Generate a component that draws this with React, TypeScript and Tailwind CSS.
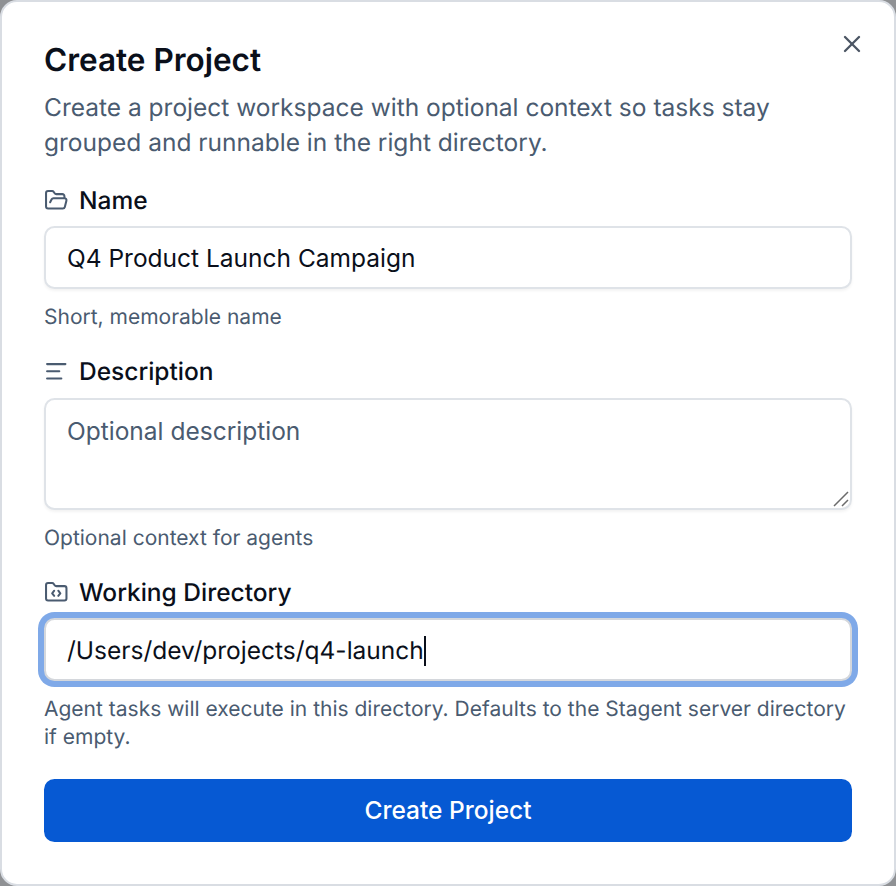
import React from 'react';
import { AlignLeft, FolderCode, FolderOpen, X } from 'lucide-react';

function FieldLabel({ icon: Icon, children }: { icon: typeof X; children: React.ReactNode }) {
  return (
    <div className="flex h-[28px] items-center gap-[10.5px] text-[24.5px] font-medium leading-[28px] text-[#0a0f1a]">
      <Icon className="h-[24.5px] w-[24.5px] text-[#4a5b70]" />
      <span>{children}</span>
    </div>
  );
}

function Help({ children }: { children: React.ReactNode }) {
  return <p className="text-[21px] leading-[28px] text-[#4a5b70]">{children}</p>;
}

export default function App() {
  return (
    <div className="h-[886px] w-[896px] bg-[#8f9194] font-['Inter',sans-serif] [text-rendering:geometricPrecision]">
      <div className="relative flex h-full flex-col rounded-[17px] border-2 border-[#d9dde3] bg-white px-[42px] pt-[40px]">
        <button className="absolute right-[28px] top-[28px] text-[#4b5563]">
          <X className="h-[28px] w-[28px]" strokeWidth={2} />
        </button>

        <h2 className="text-[31.5px] font-semibold leading-[36px] text-[#0a0f1a]">Create Project</h2>
        <p className="mt-[12px] text-[24.5px] leading-[35px] text-[#4a5b70]">
          Create a project workspace with optional context so tasks stay grouped and runnable in the right directory.
        </p>

        <div className="mt-[26px]">
          <FieldLabel icon={FolderOpen}>Name</FieldLabel>
          <input
            readOnly
            value="Q4 Product Launch Campaign"
            className="mt-[12px] block h-[63px] w-full rounded-[10.5px] border-2 border-[#dfe3e8] bg-white px-[21px] text-[24.5px] text-[#0a0f1a] shadow-[0_2px_3px_rgba(0,0,0,0.05)] outline-none"
          />
          <div className="mt-[15px]">
            <Help>Short, memorable name</Help>
          </div>
        </div>

        <div className="mt-[25px]">
          <FieldLabel icon={AlignLeft}>Description</FieldLabel>
          <div className="relative mt-[13px]">
            <textarea
              readOnly
              placeholder="Optional description"
              className="block h-[112px] w-full resize-none rounded-[10.5px] border-2 border-[#dfe3e8] bg-white px-[21px] py-[14px] text-[24.5px] leading-[35px] text-[#0a0f1a] shadow-[0_2px_3px_rgba(0,0,0,0.05)] outline-none placeholder:text-[#4a5b70]"
            />
            <svg className="absolute bottom-[3px] right-[3px] h-[16px] w-[16px] text-[#6b6b6b]" viewBox="0 0 16 16" fill="none" stroke="currentColor" strokeWidth="1.5">
              <path d="M1 15 15 1M9 15l6-6" />
            </svg>
          </div>
          <div className="mt-[15px]">
            <Help>Optional context for agents</Help>
          </div>
        </div>

        <div className="mt-[25px]">
          <FieldLabel icon={FolderCode}>Working Directory</FieldLabel>
          <div className="mt-[12px] flex h-[63px] w-full items-center rounded-[10.5px] border-2 border-[#d4d7dc] bg-white px-[21px] pt-[2px] text-[24.5px] text-[#0a0f1a] shadow-[0_0_0_6px_#7fa9e8]">
            <span>/Users/dev/projects/q4-launch</span>
            <span className="h-[30px] w-[2px] bg-[#0a0f1a]" />
          </div>
          <div className="mt-[15px]">
            <Help>Agent tasks will execute in this directory. Defaults to the Stagent server directory if empty.</Help>
          </div>
        </div>

        <button className="mt-[27px] h-[63px] w-full rounded-[10.5px] bg-[#0659d3] text-[24.5px] font-medium text-white">
          Create Project
        </button>
      </div>
    </div>
  );
}
